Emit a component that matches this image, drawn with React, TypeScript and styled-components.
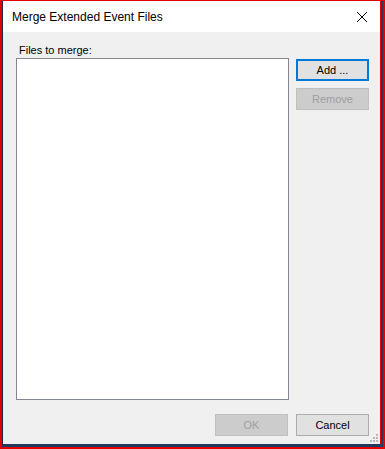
import React from "react";
import styled, { createGlobalStyle } from "styled-components";

const GlobalStyle = createGlobalStyle`
  html, body {
    margin: 0;
    padding: 0;
    background: #e50000;
  }
  body {
    padding: 1px 2px 2px 2px;
    width: 385px;
    height: 449px;
    box-sizing: border-box;
    overflow: hidden;
  }
`;

const Frame = styled.div`
  width: 381px;
  height: 446px;
  box-sizing: border-box;
  border-left: 1px solid #1b2a40;
  border-right: 2px solid #243a5a;
  border-bottom: 3px solid #243a5a;
`;

const Window = styled.div`
  position: relative;
  height: 100%;
  display: flex;
  flex-direction: column;
  background: #f0f0f0;
  border-right: 1px solid #e50000;
  font-family: "Liberation Sans", Arial, sans-serif;
  color: #000;
`;

const TitleBar = styled.div`
  height: 31px;
  flex: none;
  background: #ffffff;
  display: flex;
  align-items: center;
  justify-content: space-between;
  padding: 0 6px 0 9px;
`;

const Title = styled.span`
  font-size: 12px;
  padding-top: 1px;
`;

const CloseButton = styled.div`
  width: 24px;
  height: 24px;
  display: flex;
  align-items: center;
  justify-content: center;
`;

const Body = styled.div`
  flex: 1;
  display: grid;
  grid-template-columns: 273px 73px;
  grid-template-rows: 26px 342px 1fr;
  column-gap: 7px;
  padding: 0 0 8px 13px;
`;

const Label = styled.label`
  grid-column: 1 / 3;
  font-size: 11px;
  padding: 12px 0 0 3px;
`;

const FileList = styled.div`
  background: #ffffff;
  border: 1px solid #828790;
  box-sizing: border-box;
`;

const SideButtons = styled.div`
  display: flex;
  flex-direction: column;
  gap: 7px;
  padding-top: 1px;
`;

const Footer = styled.div`
  grid-column: 1 / 3;
  display: flex;
  justify-content: flex-end;
  align-items: flex-end;
  gap: 8px;
`;

const Button = styled.button<{ $focused?: boolean }>`
  width: 73px;
  height: 22px;
  box-sizing: border-box;
  margin: 0;
  padding: 0;
  font-family: "Liberation Sans", Arial, sans-serif;
  font-size: 11px;
  color: ${(p) => (p.disabled ? "#a0a0a0" : "#000000")};
  background: ${(p) => (p.disabled ? "#cccccc" : "#e1e1e1")};
  border: ${(p) =>
    p.$focused
      ? "2px solid #0078d7"
      : p.disabled
      ? "1px solid #bfbfbf"
      : "1px solid #adadad"};
  border-radius: 0;
`;

const Grip = styled.svg`
  position: absolute;
  right: 2px;
  bottom: 2px;
`;

const App: React.FC = () => {
  return (
    <>
      <GlobalStyle />
      <Frame>
        <Window>
          <TitleBar>
            <Title>Merge Extended Event Files</Title>
            <CloseButton>
              <svg width="12" height="12" viewBox="0 0 12 12">
                <path d="M1 1 L11 11 M11 1 L1 11" stroke="#000" strokeWidth="1" />
              </svg>
            </CloseButton>
          </TitleBar>
          <Body>
            <Label>Files to merge:</Label>
            <FileList />
            <SideButtons>
              <Button $focused>Add ...</Button>
              <Button disabled>Remove</Button>
            </SideButtons>
            <Footer>
              <Button disabled>OK</Button>
              <Button>Cancel</Button>
            </Footer>
          </Body>
          <Grip width="8" height="8" viewBox="0 0 8 8">
            <rect x="6" y="0" width="2" height="2" fill="#b8b8b8" />
            <rect x="3" y="3" width="2" height="2" fill="#b8b8b8" />
            <rect x="6" y="3" width="2" height="2" fill="#b8b8b8" />
            <rect x="0" y="6" width="2" height="2" fill="#b8b8b8" />
            <rect x="3" y="6" width="2" height="2" fill="#b8b8b8" />
            <rect x="6" y="6" width="2" height="2" fill="#b8b8b8" />
          </Grip>
        </Window>
      </Frame>
    </>
  );
};

export default App;
